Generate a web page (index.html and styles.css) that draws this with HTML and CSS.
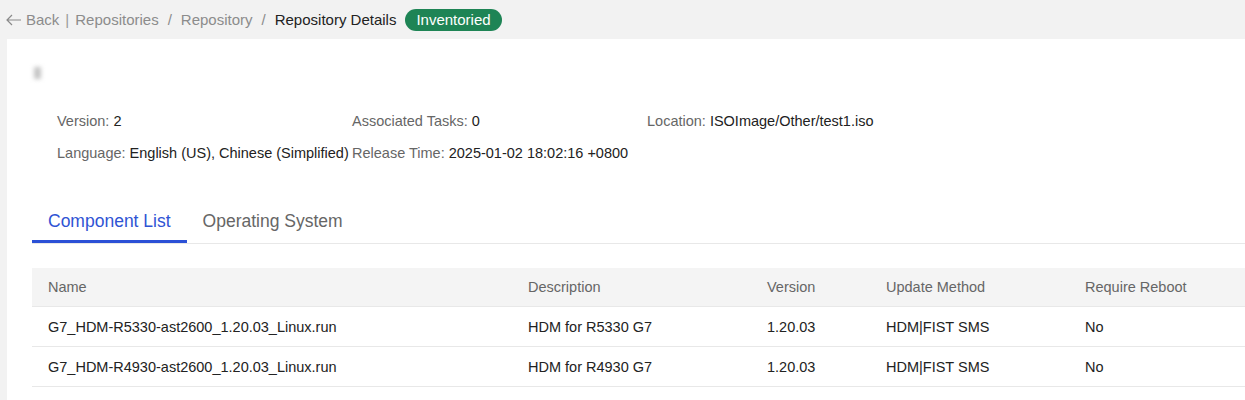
FILE: index.html
```html
<!DOCTYPE html>
<html>
<head>
<meta charset="utf-8">
<link rel="stylesheet" href="styles.css">
</head>
<body>
<div class="crumbs">
  <span class="back"><svg class="arrow" width="16" height="12" viewBox="0 0 16 12"><path d="M6 1L1 6l5 5M1 6h14" fill="none" stroke="#8a8a8a" stroke-width="1.2"/></svg>Back</span>
  <span class="sep">|</span>
  <span class="link">Repositories</span>
  <span class="slash">/</span>
  <span class="link">Repository</span>
  <span class="slash">/</span>
  <span class="current">Repository Details</span>
  <span class="badge">Inventoried</span>
</div>
<div class="panel">
  <div class="title"><div class="blur"></div></div>
  <div class="info">
    <div class="item"><span class="lbl">Version: </span><span class="val">2</span></div>
    <div class="item"><span class="lbl">Associated Tasks: </span><span class="val">0</span></div>
    <div class="item"><span class="lbl">Location: </span><span class="val">ISOImage/Other/test1.iso</span></div>
    <div class="item"><span class="lbl">Language: </span><span class="val">English (US), Chinese (Simplified)</span></div>
    <div class="item"><span class="lbl">Release Time: </span><span class="val">2025-01-02 18:02:16 +0800</span></div>
  </div>
  <div class="tabs">
    <div class="tab active">Component List</div>
    <div class="tab">Operating System</div>
  </div>
  <table class="grid">
    <colgroup><col class="c1"><col class="c2"><col class="c3"><col class="c4"><col class="c5"></colgroup>
    <thead>
      <tr><th>Name</th><th>Description</th><th>Version</th><th>Update Method</th><th>Require Reboot</th></tr>
    </thead>
    <tbody>
      <tr><td>G7_HDM-R5330-ast2600_1.20.03_Linux.run</td><td>HDM for R5330 G7</td><td>1.20.03</td><td>HDM|FIST SMS</td><td>No</td></tr>
      <tr><td>G7_HDM-R4930-ast2600_1.20.03_Linux.run</td><td>HDM for R4930 G7</td><td>1.20.03</td><td>HDM|FIST SMS</td><td>No</td></tr>
    </tbody>
  </table>
</div>
</body>
</html>
```
FILE: styles.css
```css
html, body {
  margin: 0;
  padding: 0;
  background: #f2f2f2;
  font-family: "Liberation Sans", Arial, sans-serif;
  font-size: 14.5px;
  color: #222;
}
.crumbs {
  height: 39px;
  display: flex;
  align-items: center;
  padding-left: 6px;
  font-size: 15px;
  color: #8c8c8c;
  box-sizing: border-box;
}
.back {
  display: flex;
  align-items: center;
}
.arrow {
  margin-right: 4px;
}
.sep {
  margin: 0 6px;
  color: #999;
}
.slash {
  margin: 0 9px;
  color: #8c8c8c;
}
.current {
  color: #222;
}
.badge {
  margin-left: 9px;
  background: #1e8455;
  color: #fff;
  border-radius: 11px;
  height: 22px;
  line-height: 22px;
  padding: 0 11px;
  font-size: 15px;
}
.panel {
  background: #fff;
  margin-left: 7px;
  height: 361px;
  padding: 0 0 0 25px;
  box-sizing: border-box;
  overflow: hidden;
}
.title {
  height: 73px;
  padding-top: 28px;
  box-sizing: border-box;
}
.blur {
  width: 7px;
  height: 12px;
  margin-left: 2px;
  background: #c4c4c4;
  filter: blur(2px);
}
.info {
  display: grid;
  grid-template-columns: 295px 295px 295px;
  row-gap: 14px;
  padding-left: 25px;
  line-height: 18px;
}
.lbl {
  color: #666;
}
.val {
  color: #222;
}
.tabs {
  margin-top: 40px;
  display: flex;
  border-bottom: 1px solid #e8e8e8;
  height: 42px;
  box-sizing: border-box;
}
.tab {
  font-size: 17.5px;
  color: #666;
  padding: 0 16px;
  line-height: 38px;
  height: 41px;
  box-sizing: border-box;
}
.tab.active {
  color: #2f54d4;
  border-bottom: 3px solid #2b50d6;
}
.grid {
  margin-top: 24px;
  border-collapse: collapse;
  width: 1300px;
  table-layout: fixed;
}
.c1 { width: 480px; }
.c2 { width: 239px; }
.c3 { width: 119px; }
.c4 { width: 199px; }
.c5 { width: 263px; }
.grid th {
  background: #f4f4f4;
  color: #666;
  font-weight: normal;
  text-align: left;
  height: 38px;
  padding: 0 16px;
  border-bottom: 1px solid #e8e8e8;
}
.grid td {
  height: 39px;
  padding: 0 16px;
  border-bottom: 1px solid #e8e8e8;
  color: #222;
}
```
